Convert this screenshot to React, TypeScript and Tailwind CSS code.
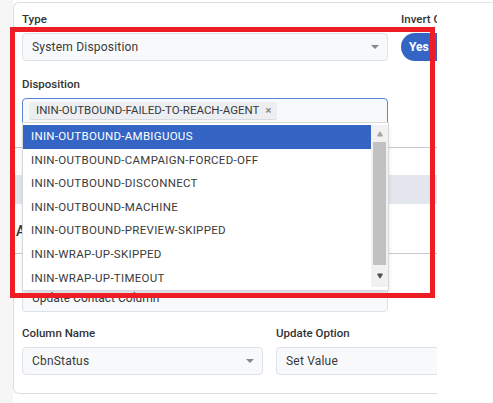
import { Triangle } from "lucide-react";

const options = [
  "ININ-OUTBOUND-AMBIGUOUS",
  "ININ-OUTBOUND-CAMPAIGN-FORCED-OFF",
  "ININ-OUTBOUND-DISCONNECT",
  "ININ-OUTBOUND-MACHINE",
  "ININ-OUTBOUND-PREVIEW-SKIPPED",
  "ININ-WRAP-UP-SKIPPED",
  "ININ-WRAP-UP-TIMEOUT",
];

const Caret = () => (
  <span className="w-0 h-0 border-l-[4px] border-r-[4px] border-t-[4px] border-l-transparent border-r-transparent border-t-[#888]" />
);

const SelectBox = ({ value, className }: { value: string; className?: string }) => (
  <div
    className={`h-[28px] flex items-center justify-between pl-[9px] pr-[8px] bg-[#f8f9fb] border border-[#dde1e8] rounded-[4px] text-[12px] text-[#3a3a3a] tracking-[0.2px] ${className ?? ""}`}
  >
    <span>{value}</span>
    <Caret />
  </div>
);

export default function App() {
  return (
    <div
      className="relative w-[493px] h-[403px] bg-white overflow-hidden flex"
      style={{ fontFamily: "Roboto, 'Liberation Sans', sans-serif" }}
    >
      <div className="w-[13px] h-full bg-[#f6f6f6]" />
      <div className="flex-1 pt-[2px] flex">
        <div className="w-[424px] h-[392px] border-l border-t border-b border-[#dcdde2] rounded-l-[6px] overflow-hidden pl-[8px] flex flex-col">
          <div className="flex gap-[13px] pt-[9px]">
            <div className="w-[366px] shrink-0 flex flex-col">
              <label className="text-[11.5px] font-medium text-[#333] leading-[14px] mb-[7px]">Type</label>
              <SelectBox value="System Disposition" />
              <label className="text-[11.5px] font-medium text-[#333] leading-[14px] mt-[16px] mb-[7px]">Disposition</label>
              <div className="h-[26px] flex items-center pl-[6px] bg-[#f8f9fb] border border-[#5b85d6] rounded-t-[4px]">
                <span className="h-[18px] flex items-center gap-[6px] pl-[7px] pr-[6px] bg-[#eceef1] border-b border-[#d8dbe0] rounded-[3px] text-[11.5px] text-[#3a3a3a]">
                  ININ-OUTBOUND-FAILED-TO-REACH-AGENT
                  <span className="text-[11px] font-bold text-[#888] leading-none">×</span>
                </span>
              </div>
            </div>
            <div className="flex flex-col whitespace-nowrap">
              <label className="text-[11.5px] font-medium text-[#333] leading-[14px] mb-[7px]">Invert Condition</label>
              <div className="h-[28px] w-[60px] flex items-center pl-[8px] bg-[#3465c4] rounded-full text-[12px] font-bold text-white">
                Yes
              </div>
            </div>
          </div>

          <div className="mt-[23px] -ml-[8px] border-t border-[#c8c9d0]" />
          <div className="mt-[27px] -ml-[8px] h-[29px] bg-[#e3e6ed]" />
          <div className="mt-[19px] -ml-[6px] text-[14px] font-medium text-[#333] leading-[16px]">Action</div>
          <div className="mt-[14px] -ml-[8px] border-t border-[#c8c9d0]" />
          <div className="mt-[30px] w-[366px] h-[28px] flex items-center pl-[9px] bg-[#f8f9fb] border border-[#dde1e8] rounded-[4px] text-[12px] text-[#3a3a3a]">
            Update Contact Column
          </div>

          <div className="flex gap-[13px] mt-[14px]">
            <div className="w-[241px] shrink-0 flex flex-col">
              <label className="text-[11.5px] font-medium text-[#333] leading-[14px] mb-[7px]">Column Name</label>
              <SelectBox value="CbnStatus" />
            </div>
            <div className="w-[200px] shrink-0 flex flex-col">
              <label className="text-[11.5px] font-medium text-[#333] leading-[14px] mb-[7px]">Update Option</label>
              <SelectBox value="Set Value" />
            </div>
          </div>
        </div>
        <div className="flex-1 border-t border-[#e4e4e4]" />
      </div>

      {/* open dropdown */}
      <div className="absolute left-[22px] top-[122px] w-[367px] h-[169px] bg-white border border-[#d6d9de] shadow-md flex pt-[2px]">
        <ul className="flex-1 flex flex-col">
          {options.map((o, i) => (
            <li
              key={o}
              className={`h-[23.6px] flex items-center pl-[8px] text-[11.5px] tracking-[0.3px] ${
                i === 0 ? "bg-[#3465c4] text-white" : "text-[#3a3a3a]"
              }`}
            >
              {o}
            </li>
          ))}
        </ul>
        <div className="w-[17px] h-[162px] bg-[#f1f1f1] flex flex-col items-center">
          <div className="h-[17px] flex items-center justify-center">
            <Triangle className="w-[8px] h-[6px] fill-[#a3a3a3] text-[#a3a3a3]" />
          </div>
          <div className="w-[13px] flex-1 bg-[#c1c1c1]" />
          <div className="h-[22px] flex items-center justify-center">
            <Triangle className="w-[8px] h-[6px] fill-[#505050] text-[#505050] rotate-180" />
          </div>
        </div>
      </div>

      {/* annotation */}
      <div className="absolute left-[10px] top-[27px] w-[425px] h-[271px] border-[5px] border-[#ee1c25] pointer-events-none" />
    </div>
  );
}
